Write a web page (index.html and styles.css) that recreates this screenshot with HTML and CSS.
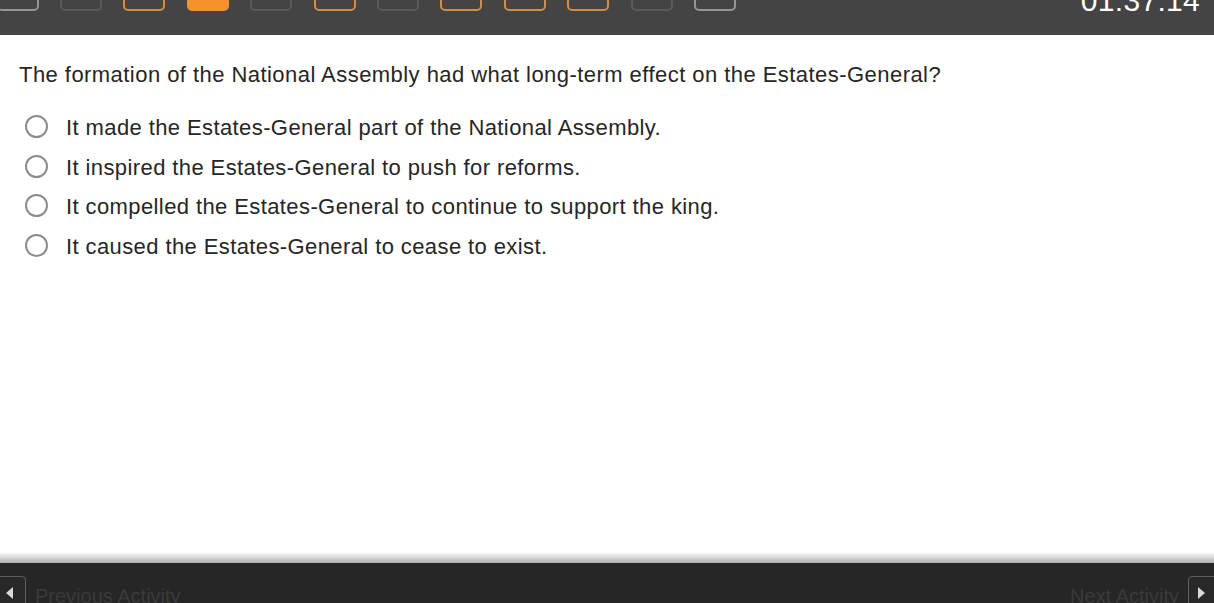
FILE: index.html
```html
<!DOCTYPE html>
<html lang="en">
<head>
<meta charset="utf-8">
<title>Quiz</title>
<link rel="stylesheet" href="styles.css">
</head>
<body>
<div class="page">
  <header class="topbar">
    <div class="progress">
      <span class="step step-light"></span>
      <span class="step step-dark"></span>
      <span class="step step-done"></span>
      <span class="step step-current"></span>
      <span class="step step-dark"></span>
      <span class="step step-done"></span>
      <span class="step step-dark"></span>
      <span class="step step-done"></span>
      <span class="step step-done"></span>
      <span class="step step-done"></span>
      <span class="step step-dark"></span>
      <span class="step step-light"></span>
    </div>
    <div class="timer">01:37:14</div>
  </header>

  <main class="content">
    <p class="question">The formation of the National Assembly had what long-term effect on the Estates-General?</p>
    <ul class="options">
      <li class="option"><span class="radio"></span><span class="label">It made the Estates-General part of the National Assembly.</span></li>
      <li class="option"><span class="radio"></span><span class="label">It inspired the Estates-General to push for reforms.</span></li>
      <li class="option"><span class="radio"></span><span class="label">It compelled the Estates-General to continue to support the king.</span></li>
      <li class="option"><span class="radio"></span><span class="label">It caused the Estates-General to cease to exist.</span></li>
    </ul>
  </main>

  <div class="shadow"></div>
  <footer class="footbar">
    <div class="nav nav-prev">
      <span class="navbtn navbtn-prev"><span class="tri tri-left"></span></span>
      <span class="navtext">Previous Activity</span>
    </div>
    <div class="nav nav-next">
      <span class="navtext">Next Activity</span>
      <span class="navbtn navbtn-next"><span class="tri tri-right"></span></span>
    </div>
  </footer>
</div>
</body>
</html>
```

FILE: styles.css
```css
* { box-sizing: border-box; }

html, body {
  margin: 0;
  padding: 0;
  height: 100%;
  overflow: hidden;
  background: #ffffff;
  font-family: "Liberation Sans", Arial, Helvetica, sans-serif;
}

.page {
  display: flex;
  flex-direction: column;
  height: 100vh;
}

/* Top bar */
.topbar {
  flex: 0 0 35px;
  height: 35px;
  background: #444444;
  display: flex;
  justify-content: space-between;
  align-items: flex-start;
  overflow: hidden;
}

.progress {
  display: flex;
  gap: 21.4px;
  margin-left: -3.4px;
}

.step {
  display: block;
  width: 42px;
  height: 30px;
  margin-top: -19.5px;
  border-radius: 5px;
  border: 2px solid #5c5c5c;
}

.step-light { border-color: #969696; }
.step-dark { border-color: #5a5a5a; }
.step-done { border-color: #d98a3a; }
.step-current { border-color: #f5922b; background: #f5922b; }

.timer {
  color: #ffffff;
  font-size: 30px;
  line-height: 30px;
  margin-top: -14px;
  padding-right: 14px;
  letter-spacing: 0.3px;
}

/* Content */
.content {
  flex: 1 1 auto;
  padding: 27px 0 0 19px;
  color: #262626;
}

.question {
  margin: 0;
  font-size: 22px;
  line-height: 25px;
  letter-spacing: 0.45px;
}

.options {
  list-style: none;
  margin: 20.75px 0 0 0;
  padding: 0 0 0 6px;
}

.option {
  display: flex;
  align-items: center;
  height: 39.5px;
  font-size: 22px;
  line-height: 25px;
  letter-spacing: 0.4px;
}

.radio {
  flex: 0 0 23px;
  width: 23px;
  height: 23px;
  border: 2px solid #8c8c8c;
  border-radius: 50%;
  margin-right: 18px;
  margin-top: -2px;
}

/* Footer */
.shadow {
  flex: 0 0 11px;
  height: 11px;
  background: linear-gradient(to bottom, rgba(0,0,0,0), rgba(0,0,0,0.32));
}

.footbar {
  flex: 0 0 40px;
  height: 40px;
  background: #262626;
  display: flex;
  justify-content: space-between;
  align-items: flex-start;
  padding-top: 13px;
  overflow: hidden;
}

.nav {
  display: flex;
  align-items: flex-start;
}

.navbtn {
  display: flex;
  align-items: center;
  justify-content: center;
  width: 30px;
  height: 34px;
  border: 1.5px solid #5e5e5e;
  border-radius: 4px;
  background: #282828;
}

.navbtn-prev { margin-left: -4px; }
.navbtn-next { margin-right: -4px; margin-left: 9px; }

.tri {
  display: block;
  width: 0;
  height: 0;
  border-top: 6px solid transparent;
  border-bottom: 6px solid transparent;
}

.tri-left { border-right: 7px solid #d8d8d8; margin-right: 4px; }
.tri-right { border-left: 7px solid #d8d8d8; margin-right: 4px; }

.navtext {
  color: #3a3a3a;
  font-size: 20px;
  line-height: 23px;
  margin-top: 8.5px;
}

.nav-prev .navtext { margin-left: 9px; }
```
